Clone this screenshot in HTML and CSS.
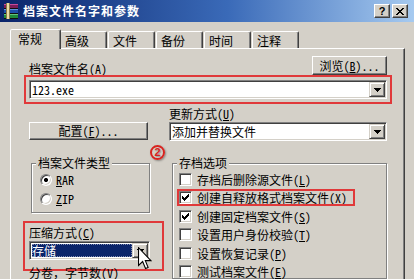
FILE: index.html
```html
<!DOCTYPE html>
<html lang="zh-CN">
<head>
<meta charset="utf-8">
<title>档案文件名字和参数</title>
<link rel="stylesheet" href="styles.css">
</head>
<body>
<div class="window">
  <div class="titlebar">
    <svg class="app-icon" viewBox="0 0 16 16" width="16" height="16" shape-rendering="crispEdges">
      <rect x="1" y="1" width="14" height="4" fill="#7a1d5a"/>
      <rect x="1" y="1" width="14" height="1" fill="#c44a9a"/>
      <rect x="1" y="6" width="14" height="4" fill="#1d4fa8"/>
      <rect x="1" y="6" width="14" height="1" fill="#5f8fe0"/>
      <rect x="1" y="11" width="14" height="4" fill="#1f8a3c"/>
      <rect x="1" y="11" width="14" height="1" fill="#62c27a"/>
      <rect x="1" y="5" width="14" height="1" fill="#101010"/>
      <rect x="1" y="10" width="14" height="1" fill="#101010"/>
      <rect x="1" y="15" width="14" height="1" fill="#101010"/>
      <rect x="3" y="0" width="3" height="16" fill="#e9dba6"/>
      <rect x="3" y="0" width="1" height="16" fill="#8a7a44"/>
      <rect x="6" y="0" width="1" height="16" fill="#8a7a44"/>
    </svg>
    <span class="title">档案文件名字和参数</span>
    <div class="caption-btns">
      <span class="cap-btn cap-help">?</span>
      <span class="cap-btn">
        <svg width="8" height="7" viewBox="0 0 8 7" shape-rendering="crispEdges"><path d="M0 0h2v1H0zM6 0h2v1H6zM1 1h2v1H1zM5 1h2v1H5zM2 2h4v1H2zM3 3h2v1H3zM2 4h4v1H2zM1 5h2v1H1zM5 5h2v1H5zM0 6h2v1H0zM6 6h2v1H6z" fill="#000"/></svg>
      </span>
    </div>
  </div>

  <div class="tabs">
    <div class="tab active">常规</div>
    <div class="tab">高级</div>
    <div class="tab">文件</div>
    <div class="tab">备份</div>
    <div class="tab">时间</div>
    <div class="tab">注释</div>
  </div>

  <div class="panel">
    <div class="row-name">
      <span class="label">档案文件名(<u>A</u>)</span>
      <button class="btn btn-browse">浏览(<u>B</u>)...</button>
    </div>
    <div class="combo combo-name">
      <span class="combo-text">123.exe</span>
      <span class="drop"><svg width="7" height="4" viewBox="0 0 7 4" shape-rendering="crispEdges"><path d="M0 0h7v1H0zM1 1h5v1H1zM2 2h3v1H2zM3 3h1v1H3z" fill="#000"/></svg></span>
    </div>

    <div class="cols">
      <div class="col-left">
        <button class="btn btn-config">配置(<u>F</u>)...</button>
        <fieldset class="group group-type">
          <legend>档案文件类型</legend>
          <div class="radio-row"><span class="radio checked"></span><span class="opt"><u>R</u>AR</span></div>
          <div class="radio-row"><span class="radio"></span><span class="opt"><u>Z</u>IP</span></div>
        </fieldset>
        <div class="mark-box">
          <div class="label">压缩方式(<u>C</u>)</div>
          <div class="combo combo-method">
            <span class="combo-text sel">存储</span>
            <span class="drop"><svg width="7" height="4" viewBox="0 0 7 4" shape-rendering="crispEdges"><path d="M0 0h7v1H0zM1 1h5v1H1zM2 2h3v1H2zM3 3h1v1H3z" fill="#000"/></svg></span>
          </div>
        </div>
        <div class="label split">分卷，字节数(<u>V</u>)</div>
      </div>

      <div class="col-right">
        <div class="label label-update">更新方式(<u>U</u>)</div>
        <div class="combo combo-update">
          <span class="combo-text">添加并替换文件</span>
          <span class="drop"><svg width="7" height="4" viewBox="0 0 7 4" shape-rendering="crispEdges"><path d="M0 0h7v1H0zM1 1h5v1H1zM2 2h3v1H2zM3 3h1v1H3z" fill="#000"/></svg></span>
        </div>
        <fieldset class="group group-opts">
          <legend>存档选项</legend>
          <div class="check-row"><span class="check"></span><span>存档后删除源文件(<u>L</u>)</span></div>
          <div class="check-row marked"><span class="check"><svg width="7" height="7" viewBox="0 0 7 7" shape-rendering="crispEdges"><path d="M6 0h1v1H6zM5 1h2v1H5zM0 2h1v1H0zM4 2h3v1H4zM0 3h2v1H0zM3 3h3v1H3zM0 4h5v1H0zM1 5h3v1H1zM2 6h1v1H2z" fill="#000"/></svg></span><span>创建自释放格式档案文件(<u>X</u>)</span></div>
          <div class="check-row"><span class="check"><svg width="7" height="7" viewBox="0 0 7 7" shape-rendering="crispEdges"><path d="M6 0h1v1H6zM5 1h2v1H5zM0 2h1v1H0zM4 2h3v1H4zM0 3h2v1H0zM3 3h3v1H3zM0 4h5v1H0zM1 5h3v1H1zM2 6h1v1H2z" fill="#000"/></svg></span><span>创建固定档案文件(<u>S</u>)</span></div>
          <div class="check-row"><span class="check"></span><span>设置用户身份校验(<u>T</u>)</span></div>
          <div class="check-row"><span class="check"></span><span>设置恢复记录(<u>P</u>)</span></div>
          <div class="check-row"><span class="check"></span><span>测试档案文件(<u>E</u>)</span></div>
        </fieldset>
      </div>
    </div>
  </div>

  <span class="badge">2</span>
  <svg class="cursor" width="14" height="23" viewBox="0 0 13 21">
    <path d="M0.5 0.5V17L4.3 13.3L7 19.8L9.4 18.8L6.8 12.5H12Z" fill="#fff" stroke="#000" stroke-width="1" stroke-linejoin="miter"/>
  </svg>
</div>
</body>
</html>
```

FILE: styles.css
```css
* { box-sizing: border-box; }

body {
  margin: 0;
  background: #d4d0c8;
  font-family: "Noto Sans Mono CJK SC", "Noto Sans CJK SC", "DejaVu Sans", sans-serif;
  font-size: 12px;
  line-height: 12px;
  color: #000;
}

u { text-decoration: underline; text-underline-offset: 1px; }

.window {
  position: relative;
  width: 414px;
  height: 279px;
  overflow: hidden;
  background: #d4d0c8;
}

/* title bar */
.titlebar {
  height: 22px;
  display: flex;
  align-items: center;
  padding: 0 6px 0 3px;
  background: linear-gradient(to right, #0a246a 0%, #3a6ab8 55%, #a6caf0 100%);
}
.app-icon { flex: none; display: block; }
.title {
  margin-left: 4px;
  color: #fff;
  font-weight: 700;
  font-size: 12px;
  line-height: 14px;
  letter-spacing: 1px;
}
.caption-btns { margin-left: auto; display: flex; gap: 2px; }
.cap-btn {
  width: 16px;
  height: 14px;
  display: flex;
  align-items: center;
  justify-content: center;
  background: #d4d0c8;
  border: 1px solid;
  border-color: #fff #404040 #404040 #fff;
  box-shadow: inset -1px -1px 0 #808080;
}
.cap-help {
  font-family: "Liberation Sans", sans-serif;
  font-weight: 700;
  font-size: 11px;
  line-height: 11px;
}

/* tabs */
.tabs {
  height: 26px;
  display: flex;
  align-items: flex-end;
  padding-left: 12px;
}
.tab {
  width: 47px;
  height: 17px;
  margin-right: 1px;
  padding: 3px 0 0 4px;
  border: 1px solid;
  border-bottom: none;
  border-color: #fff #404040 transparent #fff;
  border-radius: 2px 2px 0 0;
  box-shadow: inset -1px 0 0 #808080;
  line-height: 12px;
  background: #d4d0c8;
}
.tab.active {
  width: 51px;
  height: 20px;
  margin: 0 -1px -1px -2px;
  padding: 3px 0 0 7px;
  position: relative;
  z-index: 1;
}

/* panel */
.panel {
  margin-left: 10px;
  width: 395px;
  height: 231px;
  padding: 7px 17px 0 18px;
  border-top: 1px solid #fff;
  border-left: 1px solid #fff;
  border-right: 1px solid #404040;
  box-shadow: inset -1px 0 0 #808080;
}

.label { line-height: 12px; white-space: nowrap; }

.row-name {
  display: flex;
  justify-content: space-between;
  align-items: flex-end;
}

.btn {
  font: inherit;
  color: #000;
  margin: 0;
  padding: 0;
  background: #d4d0c8;
  border: 1px solid;
  border-color: #fff #404040 #404040 #fff;
  box-shadow: inset -1px -1px 0 #808080;
  line-height: 12px;
  display: flex;
  align-items: center;
  justify-content: center;
}
.btn-browse { width: 75px; height: 19px; }
.btn-config { width: 119px; height: 18px; margin-top: 23px; }

/* combo boxes */
.combo {
  height: 19px;
  display: flex;
  padding: 1px;
  background: #fff;
  border: 1px solid;
  border-color: #808080 #fff #fff #808080;
  box-shadow: inset 1px 1px 0 #404040, inset -1px -1px 0 #d4d0c8;
}
.combo-text {
  flex: 1;
  padding-left: 1px;
  line-height: 15px;
  white-space: nowrap;
}
.drop {
  width: 16px;
  flex: none;
  display: flex;
  align-items: center;
  justify-content: center;
  background: #d4d0c8;
  border: 1px solid;
  border-color: #d4d0c8 #404040 #404040 #d4d0c8;
  box-shadow: inset 1px 1px 0 #fff, inset -1px -1px 0 #808080;
}
.drop svg { display: block; }

.combo-name {
  margin-top: 5px;
  outline: 2px solid #e0393a;
  outline-offset: 3px;
}

.cols {
  display: grid;
  grid-template-columns: 121px 218px;
  column-gap: 19px;
}

.label-update { margin-top: 9px; }
.combo-update { margin-top: 2px; }

/* group boxes */
.group {
  margin: 0;
  min-width: 0;
  border: 1px solid #808080;
  box-shadow: inset 1px 1px 0 #fff, 1px 1px 0 #fff;
}
.group legend {
  padding: 0 2px;
  line-height: 12px;
  background: #d4d0c8;
}

.group-type {
  width: 119px;
  margin: 17px 0 0 2px;
  padding: 5px 4px 7px 4px;
  display: flex;
  flex-direction: column;
  gap: 7px;
}
.radio-row {
  margin-left: 4px;
  height: 12px;
  display: flex;
  align-items: center;
  gap: 4px;
}
.radio {
  width: 12px;
  height: 12px;
  border-radius: 50%;
  background: #fff;
  border: 1px solid;
  border-color: #808080 #fff #fff #808080;
  box-shadow: inset 1px 1px 0 #404040, inset -1px -1px 0 #d4d0c8;
}
.radio.checked {
  background: radial-gradient(circle at 50% 50%, #000 0 1.8px, #fff 2.3px);
}
.opt { line-height: 12px; }

.mark-box {
  margin: 8px -14px 0 -6px;
  padding: 4px 12px 9px 4px;
  border: 2px solid #e0393a;
}
.combo-method { margin-top: 2px; }
.combo-text.sel {
  margin: 1px 0 1px 1px;
  background: #0a246a;
  color: #fff;
  line-height: 13px;
  padding-left: 0;
  outline: 1px dotted #7f8ab0;
  outline-offset: -1px;
}
.split { margin-top: -4px; line-height: 11px; }

.group-opts {
  width: 215px;
  margin: 16px 0 0 3px;
  padding: 4px 4px 0 4px;
  display: flex;
  flex-direction: column;
  align-items: flex-start;
  gap: 5.4px;
}
.check-row {
  margin-left: 2px;
  height: 13px;
  display: flex;
  align-items: center;
  gap: 5px;
  line-height: 13px;
  white-space: nowrap;
}
.check-row.marked {
  outline: 2px solid #e0393a;
  padding-right: 6px;
}
.check {
  width: 13px;
  height: 13px;
  flex: none;
  display: flex;
  align-items: center;
  justify-content: center;
  background: #fff;
  border: 1px solid;
  border-color: #808080 #fff #fff #808080;
  box-shadow: inset 1px 1px 0 #404040, inset -1px -1px 0 #d4d0c8;
}
.check svg { display: block; }

/* annotations */
.badge {
  position: absolute;
  left: 150px;
  top: 145px;
  width: 15px;
  height: 15px;
  border: 2px solid #d8231f;
  border-radius: 50%;
  color: #d8231f;
  font-family: "Liberation Sans", sans-serif;
  font-weight: 700;
  font-size: 11px;
  line-height: 11px;
  text-align: center;
  box-shadow: 1px 1px 2px rgba(0, 0, 0, 0.35);
  text-shadow: 1px 1px 1px rgba(0, 0, 0, 0.25);
}
.cursor {
  position: absolute;
  left: 138px;
  top: 247px;
}
```
